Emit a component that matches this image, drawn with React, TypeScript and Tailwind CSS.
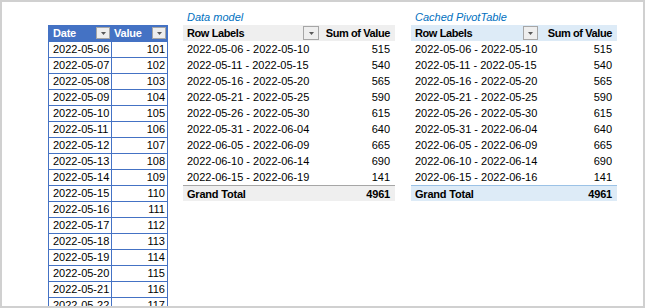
import React from 'react';

const font = { fontFamily: '"Liberation Sans", Arial, sans-serif' };

const FilterButton = ({ className }: { className: string }) => (
  <div className={`flex items-center justify-center shrink-0 bg-[#eeeeee] border border-[#a6a6a6] ${className}`}>
    <svg width="5" height="3" viewBox="0 0 5 3">
      <path d="M0 0h5L2.5 3z" fill="#595959" />
    </svg>
  </div>
);

const sourceRows = Array.from({ length: 17 }, (_, i) => {
  const d = new Date(Date.UTC(2022, 4, 6 + i));
  return { date: d.toISOString().slice(0, 10), value: 101 + i };
});

const pivotRows = [
  ['2022-05-06 - 2022-05-10', 515],
  ['2022-05-11 - 2022-05-15', 540],
  ['2022-05-16 - 2022-05-20', 565],
  ['2022-05-21 - 2022-05-25', 590],
  ['2022-05-26 - 2022-05-30', 615],
  ['2022-05-31 - 2022-06-04', 640],
  ['2022-06-05 - 2022-06-09', 665],
  ['2022-06-10 - 2022-06-14', 690],
];

const SourceTable = () => (
  <div className="w-[120px] mt-[23px] border-x border-[#4472c4] text-[11px] leading-[15px] text-black shrink-0">
    <div className="flex h-[17px] bg-[#4472c4] text-white font-bold tracking-[-0.2px] border-b border-[#4472c4]">
      <div className="w-[63px] flex items-center justify-between pl-[4px] pr-[1px] border-r border-[#4472c4]">
        <span>Date</span>
        <FilterButton className="w-[14px] h-[12px]" />
      </div>
      <div className="flex-1 flex items-center justify-between pl-[2px] pr-[1px]">
        <span>Value</span>
        <FilterButton className="w-[14px] h-[12px]" />
      </div>
    </div>
    {sourceRows.map((r) => (
      <div key={r.date} className="flex h-[16px] border-b border-[#4472c4] whitespace-nowrap">
        <div className="w-[63px] pl-[4px] border-r border-[#4472c4]">{r.date}</div>
        <div className="flex-1 text-right pr-[2px]">{r.value}</div>
      </div>
    ))}
  </div>
);

const Pivot = ({
  title,
  width,
  labelWidth,
  lastLabel,
  headBg,
  totalBorder,
  btnClass,
}: {
  title: string;
  width: string;
  labelWidth: string;
  lastLabel: string;
  headBg: string;
  totalBorder: string;
  btnClass: string;
}) => {
  const rows = [...pivotRows, [lastLabel, 141]] as [string, number][];
  return (
    <div className={`${width} shrink-0 text-[11px] leading-[16px] text-black whitespace-nowrap`}>
      <div className="h-[16px] pl-[4px] mt-[7px] italic text-[#0070c0]">{title}</div>
      <div className={`flex h-[16px] font-bold tracking-[-0.4px] ${headBg}`}>
        <div className={`${labelWidth} flex items-center justify-between pl-[4px] pr-[2px]`}>
          <span>Row Labels</span>
          <FilterButton className={btnClass} />
        </div>
        <div className="flex-1 text-right pr-[5px]">Sum of Value</div>
      </div>
      {rows.map(([label, v]) => (
        <div key={label} className="flex h-[16px]">
          <div className={`${labelWidth} pl-[4px]`}>{label}</div>
          <div className="flex-1 text-right pr-[5px]">{v}</div>
        </div>
      ))}
      <div className={`flex h-[16px] font-bold tracking-[-0.2px] border-t ${totalBorder} ${headBg}`}>
        <div className={`${labelWidth} pl-[4px]`}>Grand Total</div>
        <div className="flex-1 text-right pr-[5px]">4961</div>
      </div>
    </div>
  );
};

export default function App() {
  return (
    <div style={font} className="w-[645px] h-[308px] bg-white border-2 border-[#d0d0d0] overflow-hidden">
      <div className="flex pl-[46px]">
        <SourceTable />
        <div className="w-[15px] shrink-0" />
        <Pivot
          title="Data model"
          width="w-[212px]"
          labelWidth="w-[138px]"
          lastLabel="2022-06-15 - 2022-06-19"
          headBg="bg-[#efefef]"
          totalBorder="border-[#a6a6a6]"
          btnClass="w-[16px] h-[14px]"
        />
        <div className="w-[16px] shrink-0" />
        <Pivot
          title="Cached PivotTable"
          width="w-[206px]"
          labelWidth="w-[129px]"
          lastLabel="2022-06-15 - 2022-06-16"
          headBg="bg-[#ddebf7]"
          totalBorder="border-[#9bc2e6]"
          btnClass="w-[15px] h-[14px]"
        />
      </div>
    </div>
  );
}
